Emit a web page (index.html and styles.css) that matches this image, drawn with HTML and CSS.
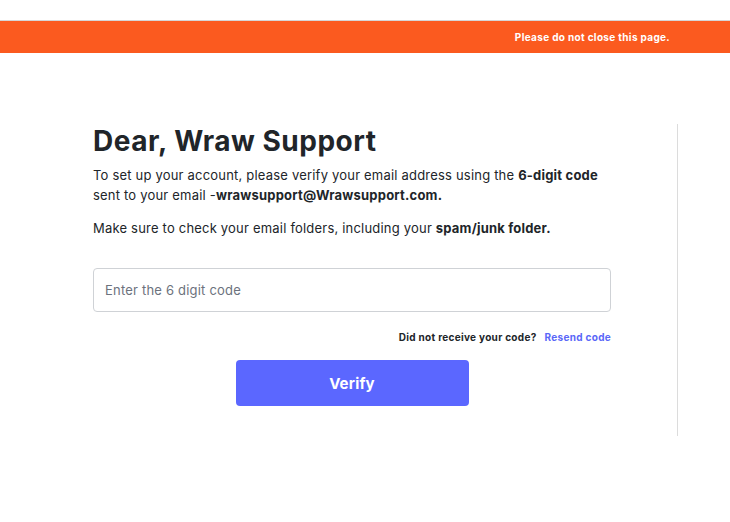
FILE: index.html
```html
<!DOCTYPE html>
<html>
<head>
<meta charset="utf-8">
<link rel="stylesheet" href="styles.css">
</head>
<body>
<div class="topgap"></div>
<div class="banner"><span class="banner-text">Please do not close this page.</span></div>
<main class="main">
  <section class="panel">
    <div class="content">
      <h1 class="title">Dear, Wraw Support</h1>
      <p class="text first">To set up your account, please verify your email address using the <b>6-digit code</b> sent to your email -<b>wrawsupport@Wrawsupport.com.</b></p>
      <p class="text second">Make sure to check your email folders, including your <b>spam/junk folder.</b></p>
      <input class="code-input" type="text" placeholder="Enter the 6 digit code">
      <div class="resend-row"><span class="resend-q">Did not receive your code?</span><a class="resend-link">Resend code</a></div>
      <div class="btn-row"><button class="verify-btn">Verify</button></div>
    </div>
  </section>
</main>
</body>
</html>
```
FILE: styles.css
```css
* { box-sizing: border-box; }
html, body { margin: 0; padding: 0; background: #fff; }
body { font-family: Inter, "Noto Sans", sans-serif; color: #212529; }
.topgap { height: 21px; border-bottom: 1px solid #d6d6d6; }
.banner {
  height: 32px;
  background: #fb5a1f;
  display: flex;
  align-items: center;
  justify-content: flex-end;
  padding-right: 60px;
}
.banner-text { color: #fff; font-weight: 700; font-size: 10px; letter-spacing: 0.33px; }
.main { padding: 71px 0 0 93px; }
.panel {
  width: 585px;
  border-right: 1px solid #dcdcdc;
  padding-bottom: 30px;
}
.content { width: 518px; display: flex; flex-direction: column; }
.title { margin: 0; font-size: 28px; font-weight: 700; line-height: 34px; color: #212529; letter-spacing: 0.5px; }
.text { margin: 0; font-size: 13px; line-height: 20px; color: #212529; letter-spacing: 0.2px; }
.text b { font-weight: 700; }
.first { margin-top: 7px; }
.second { margin-top: 13px; }
.code-input {
  margin-top: 30px;
  height: 44px;
  width: 518px;
  border: 1px solid #cfd2d6;
  border-radius: 4px;
  padding: 0 11px;
  font-family: inherit;
  font-size: 13px;
  letter-spacing: 0.2px;
  color: #212529;
  outline: none;
}
.code-input::placeholder { color: #6c727d; }
.resend-row {
  margin-top: 18px;
  display: flex;
  justify-content: flex-end;
  gap: 8px;
  font-size: 10px;
  font-weight: 700;
  line-height: 14px;
  letter-spacing: 0.3px;
}
.resend-q { color: #212529; }
.resend-link { color: #5a67f8; }
.btn-row { margin-top: 16px; display: flex; justify-content: center; }
.verify-btn {
  width: 233px;
  height: 46px;
  background: #5b67ff;
  border: none;
  border-radius: 4px;
  color: #fff;
  font-family: inherit;
  font-size: 15px;
  font-weight: 700;
  letter-spacing: 0.2px;
}
```
